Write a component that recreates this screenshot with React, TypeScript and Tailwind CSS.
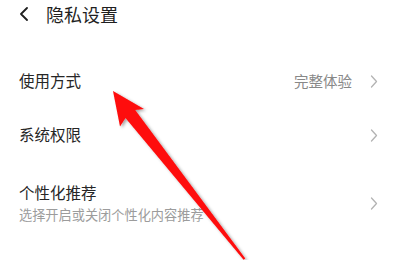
import React from "react";

const font = { fontFamily: '"Noto Sans CJK SC", "Noto Sans", sans-serif' };

function Chevron() {
  return (
    <svg width="8" height="13" viewBox="0 0 8 13" className="shrink-0">
      <path d="M1.5 1 L6.5 6.5 L1.5 12" fill="none" stroke="#b3b3b3" strokeWidth="1.3" strokeLinecap="round" strokeLinejoin="round" />
    </svg>
  );
}

export default function App() {
  return (
    <div className="relative w-[400px] h-[260px] overflow-hidden bg-white" style={font}>
      <div className="flex h-[28px] items-center pl-[19px]">
        <svg width="10" height="14" viewBox="0 0 10 14" className="shrink-0">
          <path d="M8 1 L2 7 L8 13" fill="none" stroke="#1f1f1f" strokeWidth="1.8" strokeLinecap="round" strokeLinejoin="round" />
        </svg>
        <span className="ml-[17px] text-[18px] leading-[28px] text-[#1f1f1f]">隐私设置</span>
      </div>
      <div className="mt-[26px] flex flex-col pl-[19px] pr-[22px]">
        <div className="flex h-[54px] items-center">
          <span className="flex-1 text-[15.5px] text-[#262626]">使用方式</span>
          <span className="mr-[18px] text-[14.5px] text-[#888888]">完整体验</span>
          <Chevron />
        </div>
        <div className="flex h-[54px] items-center">
          <span className="flex-1 text-[15.5px] text-[#262626]">系统权限</span>
          <Chevron />
        </div>
        <div className="flex items-center pt-[20px]">
          <div className="flex flex-1 flex-col gap-[4px]">
            <span className="text-[15.5px] leading-[20px] text-[#262626]">个性化推荐</span>
            <span className="text-[13.2px] leading-[18px] text-[#9c9c9c]">选择开启或关闭个性化内容推荐</span>
          </div>
          <Chevron />
        </div>
      </div>
      <svg className="absolute left-0 top-0" width="400" height="260" viewBox="0 0 400 260">
        <defs>
          <filter id="sh" x="-20%" y="-20%" width="140%" height="140%">
            <feDropShadow dx="2" dy="1.5" stdDeviation="1.8" floodColor="#000" floodOpacity="0.35" />
          </filter>
        </defs>
        <polygon
          points="113,91 144,109 135.2,110 245.3,258.5 243.6,259.7 125.5,118 120,126.5"
          fill="#fe0a0a"
          filter="url(#sh)"
        />
      </svg>
    </div>
  );
}
